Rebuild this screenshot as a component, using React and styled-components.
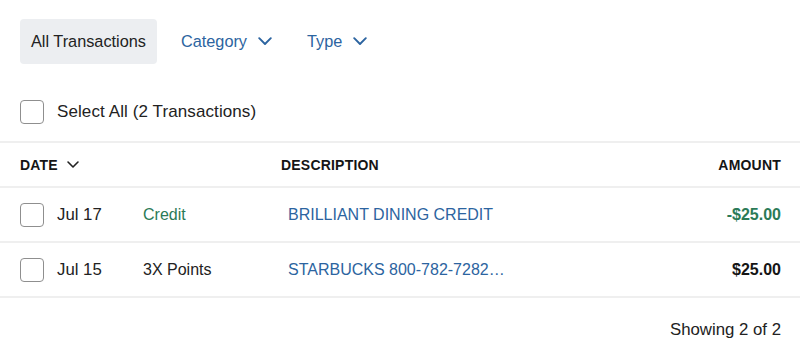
import styled, { createGlobalStyle } from "styled-components";

const GlobalStyle = createGlobalStyle`
  body {
    margin: 0;
    background: #ffffff;
    font-family: "Liberation Sans", Arial, Helvetica, sans-serif;
    color: #222222;
  }
`;

const BLUE = "#2c64a0";
const GREEN = "#2b7a57";

const Page = styled.div`
  width: 800px;
  padding-top: 19px;
`;

const Toolbar = styled.div`
  display: flex;
  align-items: center;
  gap: 7px;
  padding: 0 20px;
  height: 45px;
`;

const Tab = styled.button`
  display: flex;
  align-items: center;
  gap: 11px;
  height: 45px;
  padding: 0 11px;
  border: none;
  border-radius: 4px;
  background: ${(p) => (p.$active ? "#eceef1" : "transparent")};
  color: ${(p) => (p.$active ? "#222222" : BLUE)};
  font-family: inherit;
  font-size: 16.3px;
  cursor: pointer;
  & + & {
    margin-left: ${(p) => (p.$spaced ? "6px" : "0")};
  }
`;

const SelectRow = styled.label`
  display: flex;
  align-items: center;
  gap: 13px;
  margin-top: 35px;
  padding: 0 20px;
  height: 25px;
  font-size: 17px;
  letter-spacing: 0.1px;
  color: #222222;
`;

const Box = styled.span`
  display: inline-block;
  box-sizing: border-box;
  width: 24px;
  height: 24px;
  border: 1.5px solid #8f8f8f;
  border-radius: 4px;
  background: #fff;
  flex-shrink: 0;
`;

const Table = styled.div`
  margin-top: 17px;
  border-top: 2px solid #efefef;
`;

const HeaderRow = styled.div`
  display: grid;
  grid-template-columns: 261px 1fr auto;
  align-items: center;
  height: 43px;
  padding: 0 19px 0 20px;
  border-bottom: 2px solid #efefef;
  font-size: 14px;
  font-weight: 700;
  letter-spacing: 0.2px;
  color: #151515;
`;

const HeadCell = styled.div`
  display: flex;
  align-items: center;
  gap: 9px;
  justify-content: ${(p) => (p.$right ? "flex-end" : "flex-start")};
`;

const Row = styled.div`
  display: grid;
  grid-template-columns: 37px 86px 145px 1fr auto;
  align-items: center;
  height: 53px;
  padding: 0 19px 0 20px;
  border-bottom: 2px solid #efefef;
  font-size: 16px;
`;

const Cell = styled.div`
  color: ${(p) => p.$color || "#222222"};
  font-weight: ${(p) => (p.$bold ? 700 : 400)};
  font-size: ${(p) => (p.$date ? "16.8px" : "inherit")};
  text-align: ${(p) => (p.$right ? "right" : "left")};
  white-space: nowrap;
`;

const Footer = styled.div`
  display: flex;
  justify-content: flex-end;
  padding: 23px 19px 0 20px;
  font-size: 16.8px;
  line-height: 18px;
  color: #222222;
`;

function Chevron({ color, size = 14 }) {
  return (
    <svg width={size} height={size * 0.6} viewBox="0 0 14 8.4" fill="none">
      <path
        d="M1.2 1.2 L7 7 L12.8 1.2"
        stroke={color}
        strokeWidth="1.9"
        strokeLinecap="round"
        strokeLinejoin="round"
      />
    </svg>
  );
}

const rows = [
  { date: "Jul 17", kind: "Credit", kindColor: GREEN, desc: "BRILLIANT DINING CREDIT", amount: "-$25.00", amountColor: GREEN },
  { date: "Jul 15", kind: "3X Points", desc: "STARBUCKS 800-782-7282…", amount: "$25.00", amountColor: "#151515" },
];

export default function App() {
  return (
    <Page>
      <GlobalStyle />
      <Toolbar>
        <Tab $active>All Transactions</Tab>
        <Tab>
          Category <Chevron color={BLUE} />
        </Tab>
        <Tab $spaced>
          Type <Chevron color={BLUE} />
        </Tab>
      </Toolbar>

      <SelectRow>
        <Box />
        Select All (2 Transactions)
      </SelectRow>

      <Table>
        <HeaderRow>
          <HeadCell>
            DATE <Chevron color="#222" size={12} />
          </HeadCell>
          <HeadCell>DESCRIPTION</HeadCell>
          <HeadCell $right>AMOUNT</HeadCell>
        </HeaderRow>
        {rows.map((r) => (
          <Row key={r.date}>
            <Box />
            <Cell $date>{r.date}</Cell>
            <Cell $color={r.kindColor}>{r.kind}</Cell>
            <Cell $color={BLUE}>{r.desc}</Cell>
            <Cell $right $bold $color={r.amountColor}>
              {r.amount}
            </Cell>
          </Row>
        ))}
      </Table>

      <Footer>Showing 2 of 2</Footer>
    </Page>
  );
}
